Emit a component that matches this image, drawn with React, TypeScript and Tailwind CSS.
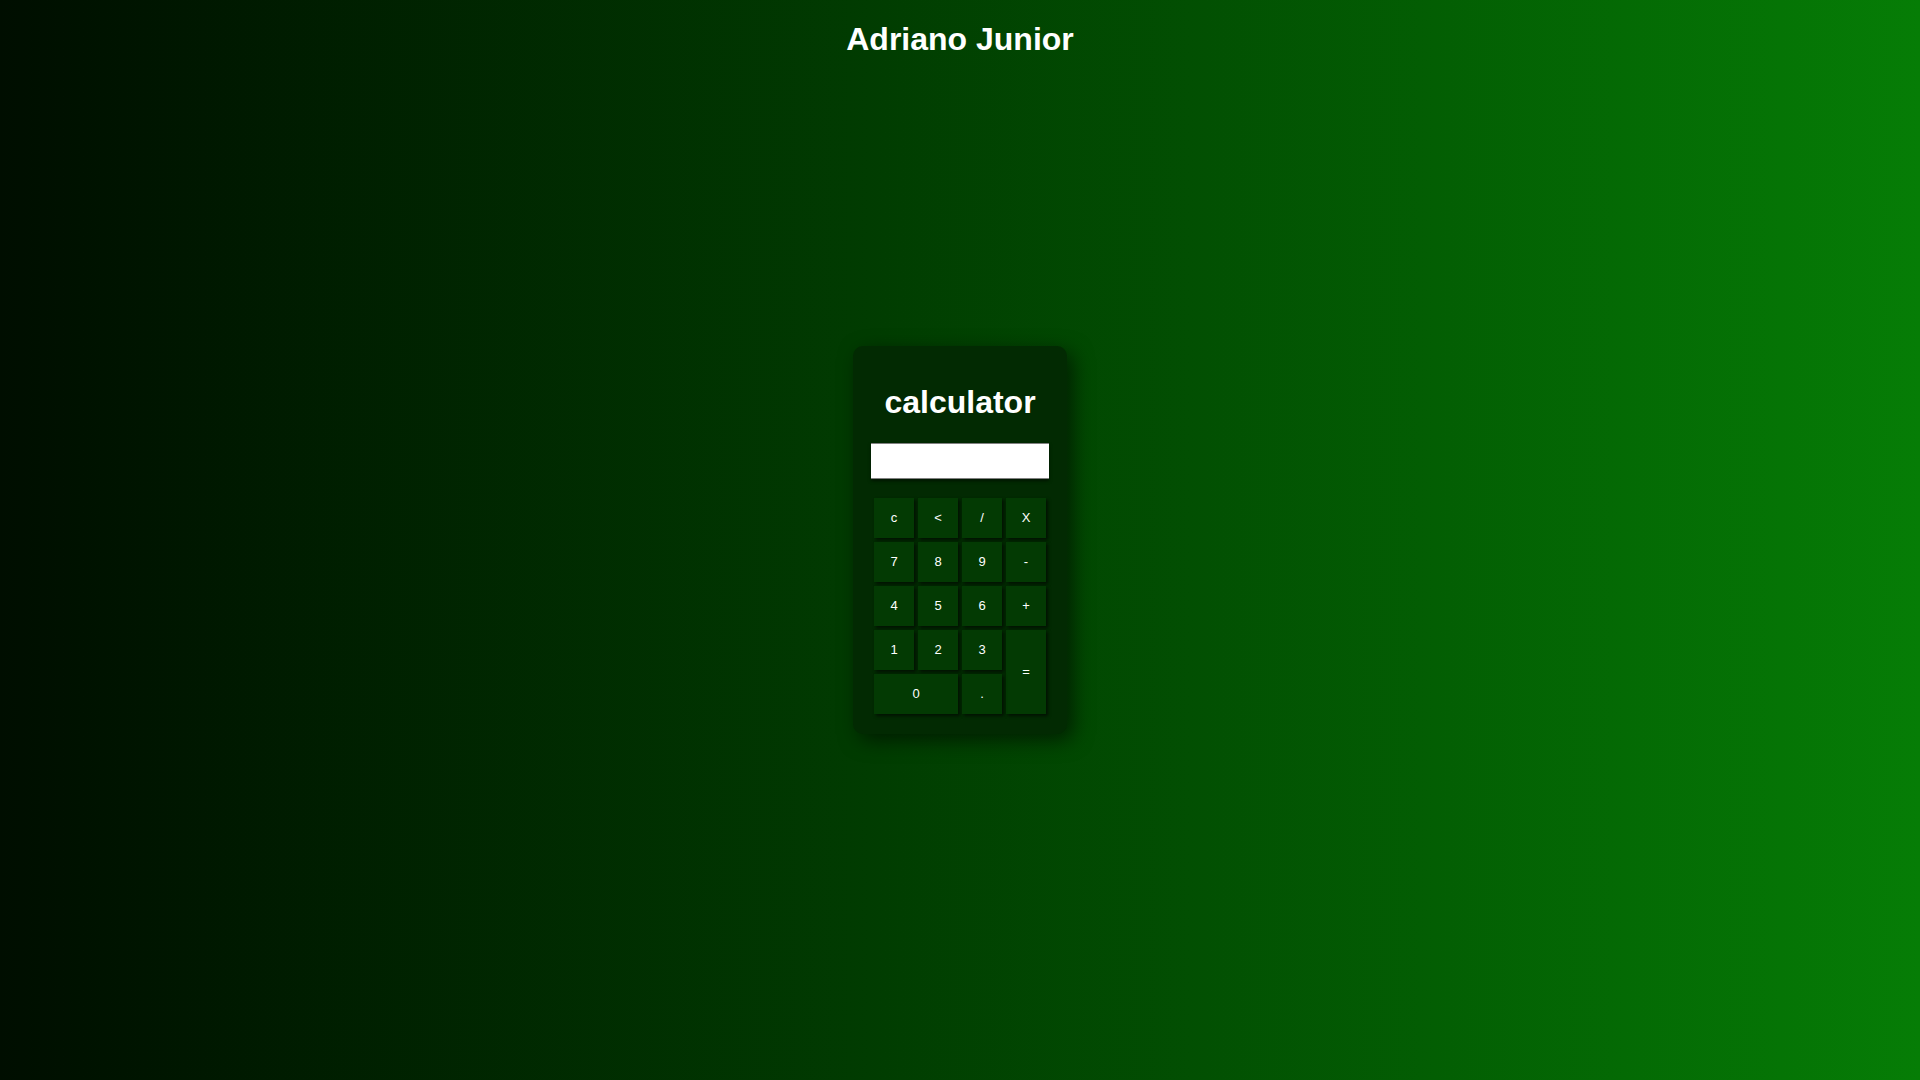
import { useState } from "react";

const KEYS: { label: string; cls?: string }[] = [
  { label: "c" },
  { label: "<" },
  { label: "/" },
  { label: "X" },
  { label: "7" },
  { label: "8" },
  { label: "9" },
  { label: "-" },
  { label: "4" },
  { label: "5" },
  { label: "6" },
  { label: "+" },
  { label: "1" },
  { label: "2" },
  { label: "3" },
  { label: "=", cls: "row-span-2" },
  { label: "0", cls: "col-span-2" },
  { label: "." },
];

export default function App() {
  const [display, setDisplay] = useState("");

  function press(key: string) {
    if (key === "c") return setDisplay("");
    if (key === "<") return setDisplay((d) => d.slice(0, -1));
    if (key === "=") {
      try {
        // eslint-disable-next-line no-new-func
        const result = Function(`return (${display.replace(/X/g, "*")})`)();
        setDisplay(String(result));
      } catch {
        setDisplay("");
      }
      return;
    }
    setDisplay((d) => d + key);
  }

  return (
    <div className="h-screen w-full grid grid-rows-[1fr_auto_1fr] bg-gradient-to-r from-[#000e00] to-[#067d06] font-['Liberation_Sans',Arial,sans-serif] text-white">
      <div className="flex justify-center items-start">
        <h1 className="text-[32px] font-bold leading-[37px] mt-[21px]">Adriano Junior</h1>
      </div>

      <div className="flex justify-center">
        <div className="w-[214px] bg-[#022a02] rounded-[10px] pt-[38px] px-[18px] pb-5 flex flex-col items-center shadow-[6px_6px_20px_rgba(0,0,0,0.55)]">
          <h1 className="text-[32px] font-bold leading-[37px]">calculator</h1>
          <input
            className="mt-[22px] w-[178px] h-9 bg-white text-black text-right px-2 border-y border-[#808080] outline-none shadow-[0_2px_3px_rgba(0,0,0,0.5)]"
            value={display}
            readOnly
          />
          <div className="mt-[19px] grid grid-cols-[repeat(4,40px)] auto-rows-[40px] gap-1">
            {KEYS.map((k) => (
              <button
                key={k.label}
                onClick={() => press(k.label)}
                className={`${k.cls ?? ""} bg-[#033a03] text-white text-[13px] shadow-[2px_2px_3px_rgba(0,0,0,0.6)] cursor-pointer`}
              >
                {k.label}
              </button>
            ))}
          </div>
        </div>
      </div>

      <div />
    </div>
  );
}
